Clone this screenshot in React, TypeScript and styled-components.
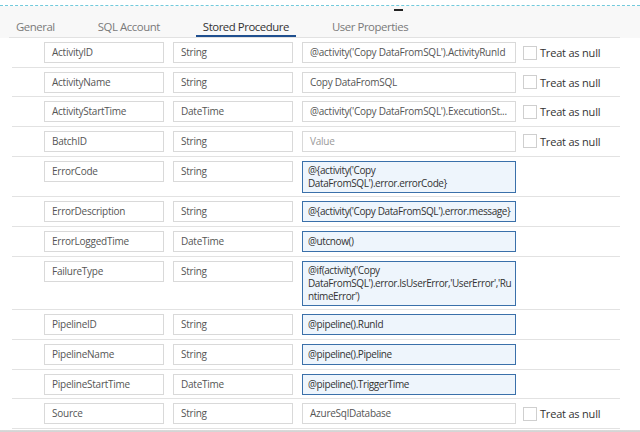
import React from "react";
import styled, { createGlobalStyle } from "styled-components";

const FONT = `"Open Sans", "Noto Sans", "Liberation Sans", sans-serif`;

const Global = createGlobalStyle`
  html, body { margin: 0; padding: 0; background: #ffffff; }
  body { width: 640px; height: 432px; overflow: hidden; font-family: ${FONT}; }
  * { box-sizing: border-box; }
`;

const Page = styled.div`
  width: 640px;
  height: 432px;
  display: flex;
  flex-direction: column;
  background: #ffffff;
  overflow: hidden;
`;

const DashedEdge = styled.div`
  height: 6px;
  flex: none;
  border-bottom: 1px dashed #72cadc;
`;

const TabStrip = styled.div`
  flex: none;
  background: #f8f8f8;
`;

const Tabs = styled.div`
  position: relative;
  display: flex;
  gap: 29px;
  height: 32px;
  margin: 0 20px 0 9px;
  border-bottom: 1px solid #e2e2e2;
`;

const Tab = styled.div<{ $active?: boolean }>`
  padding: 13px 7px 0;
  font-size: 11.4px;
  letter-spacing: -0.45px;
  line-height: 16px;
  white-space: nowrap;
  color: ${(p) => (p.$active ? "#333333" : "#7a7a7a")};
  border-bottom: 2px solid ${(p) => (p.$active ? "#1f4f8f" : "transparent")};
`;

const Marker = styled.div`
  position: absolute;
  left: 385px;
  top: 3px;
  width: 9px;
  height: 2px;
  background: #222222;
`;

const Rows = styled.div`
  flex: none;
  margin: 0 20px 0 12px;
  display: flex;
  flex-direction: column;
`;

const Row = styled.div`
  display: grid;
  grid-template-columns: 120px 120px 214px auto;
  column-gap: 9px;
  align-items: start;
  padding: 4px 0 3.67px 32px;
  border-bottom: 1px solid #e2e2e2;
`;

type Kind = "plain" | "placeholder" | "active";

const Field = styled.div<{ $kind?: Kind; $multi?: boolean }>`
  height: ${(p) => (p.$multi ? "auto" : "21px")};
  padding: ${(p) => (p.$multi ? "2px 5px" : p.$kind === "active" ? "0 5px" : "0 7px")};
  font-size: 10px;
  letter-spacing: ${(p) => (p.$kind === "active" ? "-0.4px" : "-0.25px")};
  line-height: ${(p) => (p.$multi ? "13px" : "19px")};
  white-space: ${(p) => (p.$multi ? "pre-line" : "nowrap")};
  overflow: hidden;
  text-overflow: ${(p) => (p.$kind === "active" ? "clip" : "ellipsis")};
  border: 1px solid
    ${(p) => (p.$kind === "active" ? "#3a70aa" : "#d9d9d9")};
  background: ${(p) => (p.$kind === "active" ? "#eef5fc" : "#ffffff")};
  color: ${(p) =>
    p.$kind === "active" ? "#333333" : p.$kind === "placeholder" ? "#9a9a9a" : "#555555"};
`;

const NullOption = styled.label`
  display: flex;
  align-items: center;
  gap: 3px;
  height: 21px;
  margin-left: -2px;
  font-size: 11px;
  letter-spacing: -0.2px;
  color: #333333;
  white-space: nowrap;
`;

const CheckBox = styled.span`
  width: 14px;
  height: 14px;
  border: 1px solid #cfcfcf;
  background: #ffffff;
`;

const BottomEdge = styled.div`
  flex: none;
  height: 4px;
  margin-top: 1px;
  background: linear-gradient(#dcdcdc, #c9c9c9);
`;

type Param = {
  name: string;
  type: string;
  value: string;
  kind: Kind;
  nullable?: boolean;
};

const params: Param[] = [
  { name: "ActivityID", type: "String", value: "@activity('Copy DataFromSQL').ActivityRunId", kind: "plain", nullable: true },
  { name: "ActivityName", type: "String", value: "Copy DataFromSQL", kind: "plain", nullable: true },
  { name: "ActivityStartTime", type: "DateTime", value: "@activity('Copy DataFromSQL').ExecutionSt...", kind: "plain", nullable: true },
  { name: "BatchID", type: "String", value: "Value", kind: "placeholder", nullable: true },
  { name: "ErrorCode", type: "String", value: "@{activity('Copy\nDataFromSQL').error.errorCode}", kind: "active" },
  { name: "ErrorDescription", type: "String", value: "@{activity('Copy DataFromSQL').error.message}", kind: "active" },
  { name: "ErrorLoggedTime", type: "DateTime", value: "@utcnow()", kind: "active" },
  { name: "FailureType", type: "String", value: "@if(activity('Copy\nDataFromSQL').error.IsUserError,'UserError','Ru\nntimeError')", kind: "active" },
  { name: "PipelineID", type: "String", value: "@pipeline().RunId", kind: "active" },
  { name: "PipelineName", type: "String", value: "@pipeline().Pipeline", kind: "active" },
  { name: "PipelineStartTime", type: "DateTime", value: "@pipeline().TriggerTime", kind: "active" },
  { name: "Source", type: "String", value: "AzureSqlDatabase", kind: "plain", nullable: true },
];

const tabs = ["General", "SQL Account", "Stored Procedure", "User Properties"];

export default function App() {
  return (
    <Page>
      <Global />
      <DashedEdge />
      <TabStrip>
        <Tabs>
          {tabs.map((t) => (
            <Tab key={t} $active={t === "Stored Procedure"}>
              {t}
            </Tab>
          ))}
          <Marker />
        </Tabs>
      </TabStrip>
      <Rows>
        {params.map((p) => {
          const multi = p.value.includes("\n");
          return (
            <Row key={p.name}>
              <Field>{p.name}</Field>
              <Field>{p.type}</Field>
              <Field $kind={p.kind} $multi={multi}>
                {p.value}
              </Field>
              {p.nullable ? (
                <NullOption>
                  <CheckBox />
                  Treat as null
                </NullOption>
              ) : (
                <span />
              )}
            </Row>
          );
        })}
      </Rows>
      <BottomEdge />
    </Page>
  );
}
